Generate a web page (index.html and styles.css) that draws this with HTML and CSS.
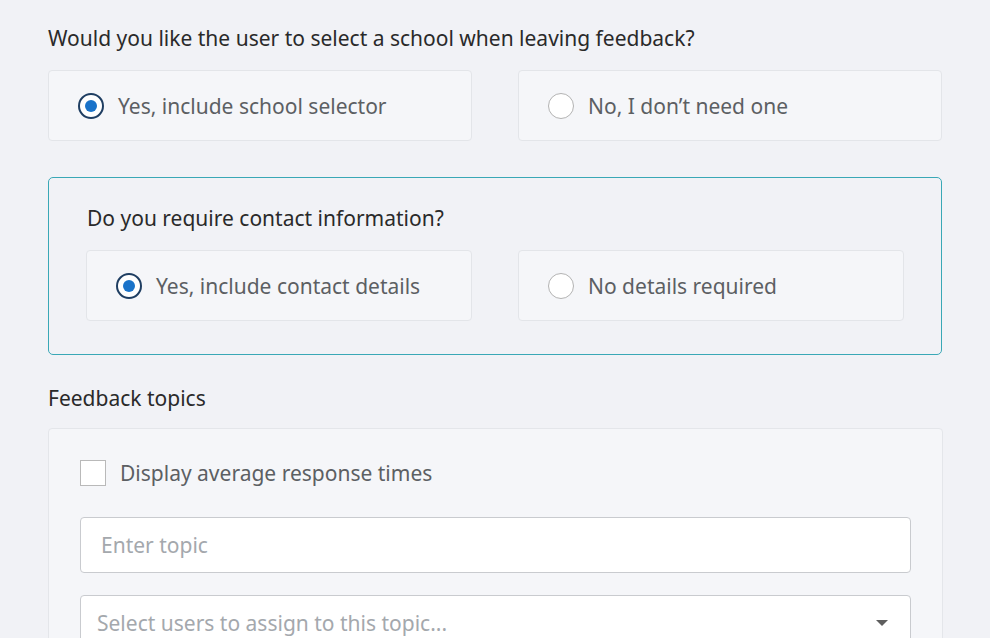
FILE: index.html
```html
<!DOCTYPE html>
<html>
<head>
<meta charset="utf-8">
<link rel="stylesheet" href="styles.css">
</head>
<body>
<main class="page">
  <section class="group">
    <p class="question">Would you like the user to select a school when leaving feedback?</p>
    <div class="options">
      <label class="option"><span class="radio radio-on"></span><span class="option-text">Yes, include school selector</span></label>
      <label class="option"><span class="radio"></span><span class="option-text">No, I don’t need one</span></label>
    </div>
  </section>

  <section class="group group-boxed">
    <p class="question">Do you require contact information?</p>
    <div class="options">
      <label class="option"><span class="radio radio-on"></span><span class="option-text">Yes, include contact details</span></label>
      <label class="option"><span class="radio"></span><span class="option-text">No details required</span></label>
    </div>
  </section>

  <section class="topics">
    <p class="question">Feedback topics</p>
    <div class="topics-card">
      <label class="check-row"><span class="checkbox"></span><span class="option-text">Display average response times</span></label>
      <div class="field"><span class="placeholder">Enter topic</span></div>
      <div class="field select"><span class="placeholder select-ph">Select users to assign to this topic...</span><span class="caret"></span></div>
    </div>
  </section>
</main>
</body>
</html>
```

FILE: styles.css
```css
* { box-sizing: border-box; }
html, body { margin: 0; padding: 0; }
body {
  background: #f1f2f6;
  font-family: "Noto Sans", "Open Sans", sans-serif;
  color: #2a2a2a;
  height: 638px;
  overflow: hidden;
}
.page {
  padding: 24px 0 0 48px;
  width: 943px;
}
.question {
  margin: 0;
  font-size: 21px;
  line-height: 28px;
  color: #2a2a2a;
}
.group .options {
  margin-top: 18px;
  display: grid;
  grid-template-columns: 1fr 1fr;
  column-gap: 46px;
}
.group { width: 894px; }
.option {
  height: 71px;
  display: flex;
  align-items: center;
  padding-left: 29px;
  background: #f5f6f9;
  border: 1px solid #e3e5e9;
  border-radius: 4px;
}
.option-text {
  font-size: 21px;
  color: #5c5f63;
}
.radio {
  width: 26px;
  height: 26px;
  border-radius: 50%;
  border: 1.5px solid #b3b3b3;
  background: #fff;
  margin-right: 14px;
  flex: none;
  position: relative;
}
.radio-on {
  border: 2px solid #1f3e62;
}
.radio-on::after {
  content: "";
  position: absolute;
  left: 50%;
  top: 50%;
  width: 12px;
  height: 12px;
  margin: -6px 0 0 -6px;
  border-radius: 50%;
  background: #1a73c9;
}
.group-boxed {
  margin-top: 36px;
  border: 1px solid #3aa8b6;
  border-radius: 5px;
  padding: 26px 37px 33px 37px;
}
.group-boxed .question { padding-left: 1px; }
.topics { margin-top: 29px; }
.topics-card {
  margin-top: 16px;
  width: 895px;
  height: 240px;
  background: #f5f6f9;
  border: 1px solid #e4e6ea;
  border-radius: 4px;
  padding: 31px 31px 0 31px;
}
.check-row {
  display: flex;
  align-items: center;
  height: 26px;
}
.checkbox {
  width: 26px;
  height: 26px;
  background: #fff;
  border: 1px solid #b9b9b9;
  margin-right: 14px;
  flex: none;
}
.field {
  margin-top: 31px;
  height: 56px;
  background: #fff;
  border: 1px solid #c9cbcf;
  border-radius: 4px;
  display: flex;
  align-items: center;
  padding-left: 20px;
}
.field.select {
  margin-top: 22px;
  padding-left: 16px;
  padding-right: 22px;
  justify-content: space-between;
}
.placeholder {
  font-size: 21px;
  color: #a4a8ad;
}
.caret {
  width: 0;
  height: 0;
  border-left: 6px solid transparent;
  border-right: 6px solid transparent;
  border-top: 6px solid #5e5e5e;
}
```
